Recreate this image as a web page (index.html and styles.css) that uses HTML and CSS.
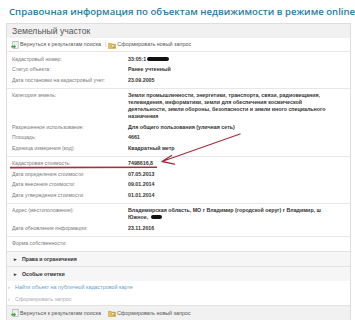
FILE: index.html
```html
<!DOCTYPE html>
<html lang="ru">
<head>
<meta charset="utf-8">
<title>Справочная информация по объектам недвижимости в режиме online</title>
<link rel="stylesheet" href="styles.css">
</head>
<body>
<div class="top">
	<h1 class="title">Справочная информация по объектам недвижимости в режиме online</h1>
	<span class="edge"></span>
</div>
<div class="panel">
	<div class="panel-head">Земельный участок</div>
	<!--toolbar-->
	<div class="tools">
		<a class="tool">
			<svg class="ico" viewBox="0 0 9 9"><rect x="2" y="0.5" width="6" height="7.6" fill="#fff" stroke="#8d9aa6" stroke-width="0.7"/><path d="M3.2 2.2h3.6M3.2 3.6h3.6" stroke="#b9c2ca" stroke-width="0.5"/><path d="M0.3 5.4h3V4l2.4 2.3-2.4 2.3V7.2h-3z" fill="#3da638"/></svg>Вернуться к результатам поиска
		</a>
		<span class="sep">|</span>
		<a class="tool">
			<svg class="ico" viewBox="0 0 9 9"><path d="M0.5 2.6h3l0.8 0.9h4.2v5h-8z" fill="#e9c24c" stroke="#b58c22" stroke-width="0.5"/><circle cx="5.6" cy="5.4" r="1.6" fill="#fff6c8" stroke="#7b7b7b" stroke-width="0.6"/><path d="M6.7 6.5l1.4 1.4" stroke="#7b7b7b" stroke-width="0.8"/></svg>Сформировать новый запрос
		</a>
	</div>
	<!--data-->
	<div class="group">
		<div class="row"><span class="lbl">Кадастровый номер:</span><span class="val">33:05:1<i class="hide"></i></span></div>
		<div class="row"><span class="lbl">Статус объекта:</span><span class="val">Ранее учтенный</span></div>
		<div class="row"><span class="lbl">Дата постановки на кадастровый учет:</span><span class="val">23.09.2005</span></div>
	</div>
	<div class="group">
		<div class="row"><span class="lbl">Категория земель:</span><span class="val">Земли промышленности, энергетики, транспорта, связи, радиовещания, телевидения, информатики, земли для обеспечения космической деятельности, земли обороны, безопасности и земли иного специального назначения</span></div>
		<div class="row"><span class="lbl">Разрешенное использование:</span><span class="val">Для общего пользования (уличная сеть)</span></div>
		<div class="row"><span class="lbl">Площадь:</span><span class="val">4661</span></div>
		<div class="row"><span class="lbl">Единица измерения (код):</span><span class="val">Квадратный метр</span></div>
	</div>
	<div class="group">
		<div class="row"><span class="lbl">Кадастровая стоимость:</span><span class="val">7498616,8</span></div>
		<div class="row"><span class="lbl">Дата определения стоимости:</span><span class="val">07.05.2013</span></div>
		<div class="row"><span class="lbl">Дата внесения стоимости:</span><span class="val">09.01.2014</span></div>
		<div class="row"><span class="lbl">Дата утверждения стоимости:</span><span class="val">01.01.2014</span></div>
	</div>
	<div class="group">
		<div class="row"><span class="lbl">Адрес (местоположение):</span><span class="val">Владимирская область, МО г Владимир (городской округ) г Владимир, ш Южное, <i class="hide short"></i></span></div>
		<div class="row"><span class="lbl">Дата обновления информации:</span><span class="val">23.11.2016</span></div>
	</div>
	<div class="group">
		<div class="row"><span class="lbl">Форма собственности:</span><span class="val"></span></div>
	</div>
	<!--folds-->
	<div class="fold"><span class="arr">&#9656;</span>Права и ограничения</div>
	<div class="fold"><span class="arr">&#9656;</span>Особые отметки</div>
	<div class="links">
		<a class="link"><span class="chev">&rsaquo;</span>Найти объект на публичной кадастровой карте</a>
		<a class="link off"><span class="chev">&rsaquo;</span>Сформировать запрос</a>
	</div>
	<div class="tools bottom">
		<a class="tool">
			<svg class="ico" viewBox="0 0 9 9"><rect x="2" y="0.5" width="6" height="7.6" fill="#fff" stroke="#8d9aa6" stroke-width="0.7"/><path d="M3.2 2.2h3.6M3.2 3.6h3.6" stroke="#b9c2ca" stroke-width="0.5"/><path d="M0.3 5.4h3V4l2.4 2.3-2.4 2.3V7.2h-3z" fill="#3da638"/></svg>Вернуться к результатам поиска
		</a>
		<a class="tool">
			<svg class="ico" viewBox="0 0 9 9"><path d="M0.5 2.6h3l0.8 0.9h4.2v5h-8z" fill="#e9c24c" stroke="#b58c22" stroke-width="0.5"/><circle cx="5.6" cy="5.4" r="1.6" fill="#fff6c8" stroke="#7b7b7b" stroke-width="0.6"/><path d="M6.7 6.5l1.4 1.4" stroke="#7b7b7b" stroke-width="0.8"/></svg>Сформировать новый запрос
		</a>
	</div>
</div>
<!--hand drawn marks over the page-->
<svg class="marks" viewBox="0 0 355 320">
	<path d="M10 167.6L157 167.2" stroke="#a3303f" stroke-width="1.6" fill="none"/>
	<path d="M240 134L162 161.5M162 161.5L171.5 155.5M162 161.5L174.5 164.2" stroke="#a3303f" stroke-width="1.3" fill="none" stroke-linecap="round"/>
</svg>
</body>
</html>
```
FILE: styles.css
```css
body{margin:0;width:355px;height:320px;overflow:hidden;position:relative;background:#fff;font:5.2px/7px "Liberation Sans",Arial,sans-serif;color:#333;}
h1,a{margin:0;padding:0;}
a{text-decoration:none;}
/*title*/
.top{display:flex;justify-content:space-between;align-items:flex-start;height:19px;}
.title{margin:4px 0 0 9px;font:600 9.6px/15px "Open Sans",sans-serif;color:#2b7c9e;white-space:nowrap;}
.edge{width:3px;height:7px;background:#3a86b0;}
/*panel*/
.panel{margin:4px 0 0 6px;width:343px;border:1px solid #dedede;border-bottom:0;}
.panel-head{height:14px;line-height:14px;padding-left:5px;background:#f1f1f1;font-size:8.6px;color:#555;}
/*toolbar*/
.tools{display:flex;align-items:center;height:13px;padding-left:4px;font-size:5.4px;color:#555;}
	.tool{display:flex;align-items:center;color:#555;}
	.ico{width:8px;height:8px;margin-right:1px;}
	.sep{margin:0 2px 0 4px;color:#aaa;}
	.bottom{height:14px;background:#f1f1f1;border-top:1px solid #e3e3e3;border-bottom:1px solid #dedede;}
	.bottom .tool + .tool{margin-left:7px;}
/*rows*/
.group{border-top:1px solid #e6e6e6;padding:2px 0;}
	.row{display:flex;padding:1.75px 0 1.75px 5px;}
	.lbl{flex:none;width:116px;color:#7a7a7a;}
	.val{flex:none;width:208px;font-size:5.3px;font-weight:bold;color:#333;}
	.hide{display:inline-block;width:22px;height:4px;margin-left:1px;background:#111;border-radius:2px;vertical-align:0;}
	.hide.short{width:11px;}
/*folds*/
.fold{height:14px;line-height:14px;padding-left:7px;background:#f6f6f6;border-top:1px solid #e3e3e3;font-weight:bold;color:#333;}
	.arr{display:inline-block;width:8px;font-size:5px;}
.links{padding-left:1px;font-size:5.4px;}
	.link{display:flex;line-height:12px;color:#6d9ccf;}
	.chev{width:7px;}
	.link.off{color:#acacac;}
/*annotation*/
.marks{position:absolute;left:0;top:0;width:355px;height:320px;pointer-events:none;}
```
